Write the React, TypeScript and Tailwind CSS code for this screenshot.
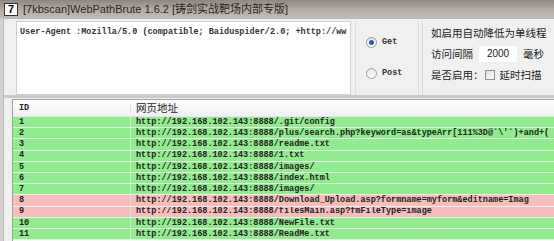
import React from "react";

const ROWS = [
  { id: "1", path: "/.git/config", bad: false },
  { id: "2", path: "/plus/search.php?keyword=as&typeArr[111%3D@`\\'`)+and+(", bad: false },
  { id: "3", path: "/readme.txt", bad: false },
  { id: "4", path: "/1.txt", bad: false },
  { id: "5", path: "/images/", bad: false },
  { id: "6", path: "/index.html", bad: false },
  { id: "7", path: "/images/", bad: false },
  { id: "8", path: "/Download_Upload.asp?formname=myform&editname=Imag", bad: true },
  { id: "9", path: "/filesMain.asp?fmFileType=image", bad: true },
  { id: "10", path: "/NewFile.txt", bad: false },
  { id: "11", path: "/ReadMe.txt", bad: false },
];

const cjk = "font-['Noto_Sans_CJK_SC','Liberation_Sans',sans-serif]";
const mono = "font-['Liberation_Mono',monospace]";

function Radio({ checked }: { checked?: boolean }) {
  return (
    <span className="w-[11px] h-[11px] rounded-full border border-[#9a9a9a] bg-gradient-to-b from-[#e6e6e6] to-white flex items-center justify-center">
      {checked && <span className="w-[5px] h-[5px] rounded-full bg-[#2c62a8]" />}
    </span>
  );
}

export default function App() {
  return (
    <div className="w-[554px] h-[241px] overflow-hidden bg-[#d6d0cc] flex flex-col">
      {/* 标题栏 */}
      <div className="h-[18px] flex items-center gap-[5px] pl-[4px] bg-gradient-to-b from-[#8f8581] via-[#b2a9a4] to-[#c2bab6]">
        <span className="w-[14px] h-[13px] bg-white border border-[#333] flex items-center justify-center text-[11px] font-bold leading-none text-black font-['Liberation_Sans',sans-serif]">
          7
        </span>
        <span className="font-['Liberation_Sans','Noto_Sans_CJK_SC',sans-serif] text-[11px] leading-none text-[#2a2320] whitespace-nowrap">
          [7kbscan]WebPathBrute 1.6.2 [铸剑实战靶场内部专版]
        </span>
      </div>

      <div className="flex-1 flex pl-[3px]">
        <div className="flex-1 flex flex-col bg-[#f0f0f0] border-l border-t border-[#b8b8b8]">
          {/* 上部设置区 */}
          <div className="h-[79px] flex pl-[12px] pt-[2px] border-b-[3px] border-[#c8c8c8]">
            <div className="w-[335px] h-[74px] bg-white border border-[#d0d0d0] pl-[3px] pt-[6px] overflow-hidden">
              <div className={`${mono} text-[8.5px] font-bold leading-none text-[#333] whitespace-nowrap`}>
                User-Agent :Mozilla/5.0 (compatible; Baiduspider/2.0; +http://ww
              </div>
            </div>
            <div className="w-[64px] h-[74px] border-l border-r border-[#dcdcdc] ml-[4px] flex flex-col gap-[20px] pt-[16px] pl-[10px]">
              <div className="flex items-center gap-[5px]">
                <Radio checked />
                <span className={`${mono} text-[8.5px] font-bold text-[#333] leading-none`}>Get</span>
              </div>
              <div className="flex items-center gap-[5px]">
                <Radio />
                <span className={`${mono} text-[8.5px] font-bold text-[#333] leading-none`}>Post</span>
              </div>
            </div>
            <div className={`flex-1 border-l border-[#dcdcdc] ml-[3px] pl-[8px] pt-[4px] flex flex-col ${cjk} text-[10.5px] text-[#222] leading-none whitespace-nowrap`}>
              <div className="h-[16px] flex items-center">如启用自动降低为单线程</div>
              <div className="h-[22px] flex items-center mt-[2px]">
                <span>访问间隔</span>
                <span className="w-[38px] h-[16px] bg-white ml-[6px] mr-[6px] flex items-center justify-center text-[10px] font-['Liberation_Sans',sans-serif]">
                  2000
                </span>
                <span>毫秒</span>
              </div>
              <div className="h-[20px] flex items-center">
                <span>是否启用：</span>
                <span className="w-[10px] h-[10px] border border-[#8f8f8f] bg-gradient-to-br from-[#dcdcdc] to-white ml-[1px] mr-[5px]" />
                <span>延时扫描</span>
              </div>
            </div>
          </div>

          {/* 列表 */}
          <div className="flex-1 ml-[8px] mt-[1px] bg-white border-l border-t border-[#a0a0a0] flex flex-col overflow-hidden">
            <div className="h-[17px] flex items-center bg-gradient-to-b from-white to-[#f3eef6] text-[#222] border-b border-[#e6e6e6]">
              <div className={`w-[117px] pl-[6px] ${mono} text-[8.5px] font-bold leading-none`}>ID</div>
              <div className={`flex-1 pl-[5px] border-l border-[#e2e2e2] ${cjk} text-[10.5px] leading-none`}>网页地址</div>
            </div>
            {ROWS.map((r) => (
              <div
                key={r.id}
                className={`h-[11.2px] flex items-center border-b border-[#e4f4e4] ${mono} text-[8.5px] font-bold leading-none text-[#222] whitespace-nowrap ${
                  r.bad ? "bg-[#f8bcbc]" : "bg-[#90ec8c]"
                }`}
              >
                <div className="w-[117px] pl-[6px] h-full flex items-center">{r.id}</div>
                <div className="flex-1 pl-[5px] h-full flex items-center border-l border-[#c8f0c8] overflow-hidden">
                  http://192.168.102.143:8888{r.path}
                </div>
              </div>
            ))}
          </div>
        </div>
      </div>
    </div>
  );
}
